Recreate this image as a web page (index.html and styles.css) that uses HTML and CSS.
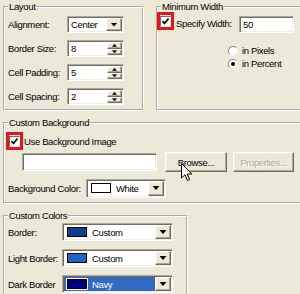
FILE: index.html
```html
<!DOCTYPE html>
<html lang="en">
<head>
    <meta charset="UTF-8">
    <meta name="viewport" content="width=device-width, initial-scale=1.0">
    <title>Table Properties</title>
    <link rel="stylesheet" href="styles.css">
</head>
<body>
<div class="dialog">
    <div class="top-row">
        <fieldset class="group layout-group">
            <legend>Layout</legend>
            <div class="form-grid">
                <label>Alignment:</label>
                <div class="field select"><span class="field-text">Center</span><span class="drop-btn"></span></div>

                <label>Border Size:</label>
                <div class="field spin"><span class="field-text">8</span><span class="spin-btns"><span class="spin-btn up"></span><span class="spin-btn down"></span></span></div>

                <label>Cell Padding:</label>
                <div class="field spin"><span class="field-text">5</span><span class="spin-btns"><span class="spin-btn up"></span><span class="spin-btn down"></span></span></div>

                <label>Cell Spacing:</label>
                <div class="field spin"><span class="field-text">2</span><span class="spin-btns"><span class="spin-btn up"></span><span class="spin-btn down"></span></span></div>
            </div>
        </fieldset>

        <fieldset class="group width-group">
            <legend>Minimum Width</legend>
            <div class="width-row">
                <span class="mark"><span class="checkbox"><svg width="9" height="9" viewBox="0 0 9 9"><polyline points="1.5,4 3.5,6.5 7.5,1.5" fill="none" stroke="#000" stroke-width="1.7"/></svg></span></span>
                <span class="width-label">Specify Width:</span>
                <div class="field width-field"><span class="field-text">50</span></div>
            </div>
            <div class="radio-list">
                <div class="radio-row"><span class="radio"></span>in Pixels</div>
                <div class="radio-row"><span class="radio checked"></span>in Percent</div>
            </div>
        </fieldset>
    </div>

    <fieldset class="group bg-group">
        <legend>Custom Background</legend>
        <div class="check-row">
            <span class="mark"><span class="checkbox"><svg width="9" height="9" viewBox="0 0 9 9"><polyline points="1.5,4 3.5,6.5 7.5,1.5" fill="none" stroke="#000" stroke-width="1.7"/></svg></span></span>
            <span>Use Background Image</span>
        </div>
        <div class="image-row">
            <div class="field image-field"></div>
            <span class="button browse">Browse...</span>
            <span class="button disabled">Properties...</span>
        </div>
        <div class="color-row">
            <label>Background Color:</label>
            <div class="field select color-select bg-select"><span class="swatch white"></span><span class="field-text">White</span><span class="drop-btn"></span></div>
        </div>
    </fieldset>

    <fieldset class="group colors-group">
        <legend>Custom Colors</legend>
        <div class="colors-grid">
            <label>Border:</label>
            <div class="field select color-select"><span class="swatch border-blue"></span><span class="field-text">Custom</span><span class="drop-btn"></span></div>

            <label>Light Border:</label>
            <div class="field select color-select"><span class="swatch light-blue"></span><span class="field-text">Custom</span><span class="drop-btn"></span></div>

            <label>Dark Border</label>
            <div class="field select color-select selected"><span class="swatch navy"></span><span class="field-text">Navy</span><span class="drop-btn"></span></div>
        </div>
    </fieldset>

    <!-- mouse pointer over the Browse button -->
    <svg class="cursor" width="13" height="19" viewBox="0 0 13 19">
        <path d="M0.5,0.5 L0.5,15 L4,11.8 L6.4,17.5 L8.6,16.6 L6.2,11 L10.8,11 Z" fill="#fff" stroke="#000" stroke-width="1" stroke-linejoin="miter"/>
    </svg>
</div>
</body>
</html>
```

FILE: styles.css
```css
/* Classic Windows dialog look */
html, body {
    margin: 0;
    overflow: hidden;
}

body {
    background-color: #ece9d8;
    font-family: "Liberation Sans", Arial, sans-serif;
    font-size: 9.5px;
    letter-spacing: -0.35px;
    color: #000;
}

.dialog {
    position: relative;
    width: 330px;
    padding-top: 1px;
}

/* Group boxes */
.group {
    margin: 0;
    padding: 0 3px;
    border: 2px groove #fff;
    min-width: 0;
}

.group legend {
    padding: 0 1px;
    line-height: 12px;
}

.top-row {
    display: flex;
    height: 110px;
}

.layout-group {
    width: 141px;
    margin-left: 3px;
    box-sizing: border-box;
    padding-top: 3px;
}

.width-group {
    margin-left: 12px;
    flex: 1;
}

.bg-group {
    margin: 6px 0 0 3px;
    height: 87px;
    box-sizing: border-box;
}

.colors-group {
    margin: 6px 0 0 3px;
    width: 185px;
    box-sizing: border-box;
    height: 100px;
    padding-top: 1px;
}

/* Form grid */
.form-grid {
    display: grid;
    grid-template-columns: 59px 57px;
    grid-auto-rows: 17px;
    row-gap: 7px;
    align-items: center;
}

.colors-grid {
    display: grid;
    grid-template-columns: 54px 111px;
    grid-auto-rows: 18px;
    row-gap: 8px;
    align-items: center;
}

/* Sunken edit field */
.field {
    box-sizing: border-box;
    height: 17px;
    display: flex;
    align-items: stretch;
    background-color: #fff;
    border: 1px solid;
    border-color: #aca899 #fff #fff #aca899;
    box-shadow: inset 1px 1px #716f64, inset -1px -1px #f1efe2;
    padding: 1px;
}

.field-text {
    flex: 1;
    display: flex;
    align-items: center;
    padding-left: 2px;
    white-space: nowrap;
}

/* Raised button face */
.drop-btn, .spin-btn, .button {
    box-sizing: border-box;
    background-color: #ece9d8;
    border: 1px solid;
    border-color: #fff #716f64 #716f64 #fff;
    box-shadow: inset -1px -1px #aca899, inset 1px 1px #f1efe2;
}

.drop-btn {
    width: 16px;
    display: flex;
    align-items: center;
    justify-content: center;
}

.drop-btn::after {
    content: "";
    width: 7px;
    height: 4px;
    background-color: #000;
    clip-path: polygon(0 0, 100% 0, 50% 100%);
}

.spin-btns {
    width: 15px;
    display: flex;
    flex-direction: column;
}

.spin-btn {
    flex: 1;
    display: flex;
    align-items: center;
    justify-content: center;
}

.spin-btn::after {
    content: "";
    width: 5px;
    height: 3px;
    background-color: #000;
}

.spin-btn.up::after {
    clip-path: polygon(50% 0, 100% 100%, 0 100%);
}

.spin-btn.down::after {
    clip-path: polygon(0 0, 100% 0, 50% 100%);
}

/* Minimum width */
.width-row {
    display: flex;
    align-items: flex-start;
    margin-top: -1px;
}

.width-row .mark {
    margin-left: -4px;
}

.width-label {
    margin: 6px 0 0 2px;
    width: 63px;
}

.width-field {
    width: 55px;
    margin-top: 4px;
}

.radio-list {
    margin: 11px 0 0 67px;
}

.radio-row {
    display: flex;
    align-items: center;
    height: 13px;
}

.radio {
    box-sizing: border-box;
    width: 10px;
    height: 10px;
    margin-right: 4px;
    border-radius: 50%;
    background-color: #fff;
    border: 1px solid;
    border-color: #8a887c #f1efe2 #f1efe2 #8a887c;
    display: flex;
    align-items: center;
    justify-content: center;
}

.radio.checked::after {
    content: "";
    width: 4px;
    height: 4px;
    border-radius: 50%;
    background-color: #000;
}

/* Red highlight around a checkbox */
.mark {
    box-sizing: border-box;
    width: 17px;
    height: 18px;
    border: 3px solid #e8141c;
    display: flex;
    align-items: center;
    justify-content: center;
    flex: none;
}

.checkbox {
    box-sizing: border-box;
    width: 11px;
    height: 11px;
    background-color: #fff;
    border: 1px solid;
    border-color: #716f64 #fff #fff #716f64;
    display: flex;
    align-items: center;
    justify-content: center;
}

/* Custom background */
.check-row {
    display: flex;
    align-items: center;
    height: 20px;
    margin: 2px 0 0 -2px;
}

.check-row span + span {
    margin-left: 1px;
}

.image-row {
    display: flex;
    align-items: center;
    height: 20px;
    margin-top: 1px;
}

.image-field {
    width: 135px;
    height: 18px;
    margin-left: 14px;
}

.button {
    height: 20px;
    display: flex;
    align-items: center;
    justify-content: center;
}

.browse {
    width: 62px;
    margin-left: 8px;
}

.button.disabled {
    width: 61px;
    margin-left: 6px;
    color: #aca899;
    text-shadow: 1px 1px #fff;
}

.color-row {
    display: flex;
    align-items: center;
    height: 20px;
    margin-top: 6px;
}

.color-row label {
    width: 78px;
}

.color-select {
    height: 18px;
}

.bg-select {
    width: 80px;
    height: 19px;
}

.swatch {
    box-sizing: border-box;
    align-self: center;
    width: 20px;
    height: 10px;
    margin-left: 3px;
    border: 1px solid #000;
    flex: none;
}

.color-select .field-text {
    padding-left: 5px;
}

.swatch.white { background-color: #fff; }
.swatch.border-blue { background-color: #0b3f8c; }
.swatch.light-blue { background-color: #1d63c8; }
.swatch.navy {
    background-color: #000080;
    box-shadow: 0 0 0 1px #fff;
}

.selected .field-text,
.selected .swatch {
    color: #fff;
}

.selected {
    background-color: #316ac5;
    background-clip: content-box;
}

/* Mouse pointer */
.cursor {
    position: absolute;
    left: 181px;
    top: 163px;
}
```
